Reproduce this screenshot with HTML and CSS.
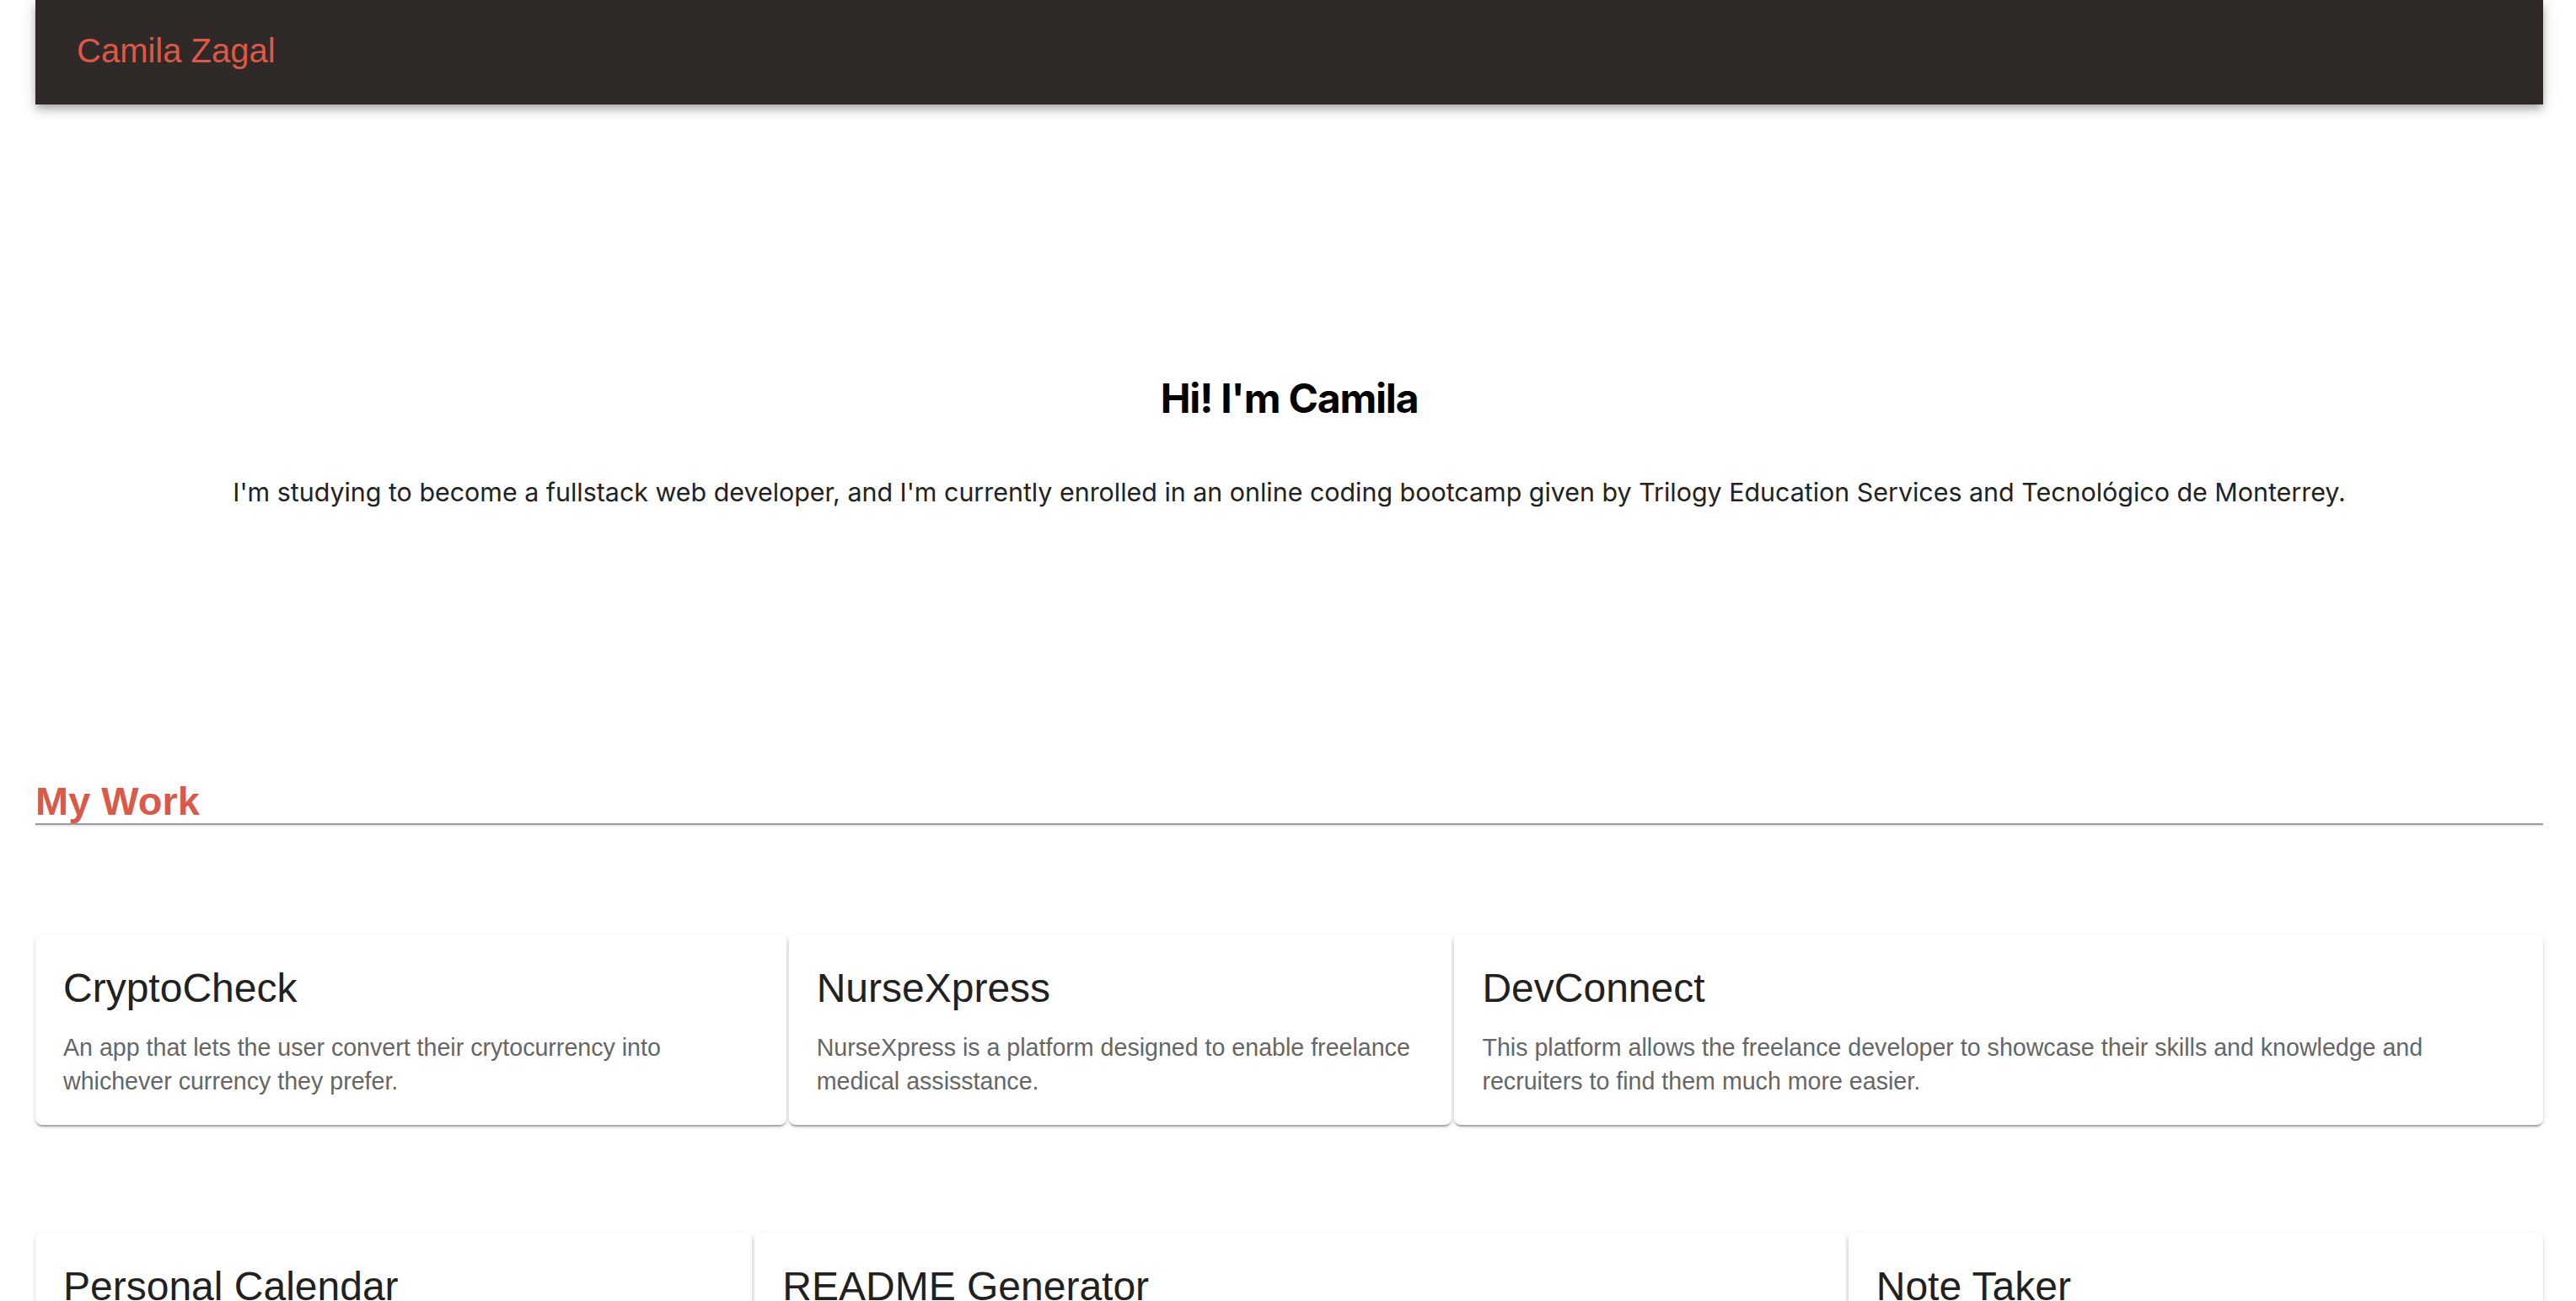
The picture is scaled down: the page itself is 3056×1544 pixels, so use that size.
FILE: index.html
```html
<!DOCTYPE html>
<html lang="en">
<head>
<meta charset="utf-8">
<title>Camila Zagal</title>
<link rel="stylesheet" href="styles.css">
</head>
<body>
<div class="page">
  <header class="appbar">
    <div class="brand">Camila Zagal</div>
  </header>

  <section class="hero">
    <h1 class="hero-title">Hi! I'm Camila</h1>
    <p class="hero-text">I'm studying to become a fullstack web developer, and I'm currently enrolled in an online coding bootcamp given by Trilogy Education Services and Tecnológico de Monterrey.</p>
  </section>

  <section class="work">
    <h2 class="work-title">My Work</h2>
    <hr class="divider">

    <div class="card-row row-one">
      <article class="card">
        <h3 class="card-title">CryptoCheck</h3>
        <p class="card-text">An app that lets the user convert their crytocurrency into whichever currency they prefer.</p>
      </article>
      <article class="card">
        <h3 class="card-title">NurseXpress</h3>
        <p class="card-text">NurseXpress is a platform designed to enable freelance medical assisstance.</p>
      </article>
      <article class="card">
        <h3 class="card-title">DevConnect</h3>
        <p class="card-text">This platform allows the freelance developer to showcase their skills and knowledge and recruiters to find them much more easier.</p>
      </article>
    </div>

    <div class="card-row row-two">
      <article class="card">
        <h3 class="card-title">Personal Calendar</h3>
        <p class="card-text">A simple calendar to plan the day.</p>
      </article>
      <article class="card">
        <h3 class="card-title">README Generator</h3>
        <p class="card-text">A command-line application that generates a README file.</p>
      </article>
      <article class="card">
        <h3 class="card-title">Note Taker</h3>
        <p class="card-text">An application to write and save notes.</p>
      </article>
    </div>
  </section>
</div>
</body>
</html>
```

FILE: styles.css
```css
html, body {
  margin: 0;
  padding: 0;
  background: #ffffff;
}

.page {
  padding: 0 39px 200px 42px;
  font-family: "Liberation Sans", Arial, sans-serif;
}

.appbar {
  height: 124px;
  background: #2f2a27;
  display: flex;
  align-items: center;
  padding: 0 48px 4px 49px;
  box-sizing: border-box;
  box-shadow: 0 4px 8px -2px rgba(0,0,0,0.2), 0 8px 10px 0 rgba(0,0,0,0.14), 0 2px 20px 0 rgba(0,0,0,0.12);
}

.brand {
  color: #dc5847;
  font-size: 40px;
  line-height: 120px;
  font-weight: 400;
}

.hero {
  padding-top: 320px;
  text-align: center;
  font-family: Inter, "Liberation Sans", sans-serif;
}

.hero-title {
  margin: 0;
  font-size: 48px;
  line-height: 58px;
  font-weight: 700;
  letter-spacing: -1.2px;
  color: #000;
}

.hero-text {
  margin: 60px 0 0;
  font-size: 30.4px;
  line-height: 45px;
  color: #222;
}

.work {
  padding-top: 318px;
}

.work-title {
  margin: 0;
  font-size: 47px;
  line-height: 52px;
  font-weight: 700;
  color: #d95a48;
}

.divider {
  margin: 0;
  height: 0;
  border: 0;
  border-top: 2px solid #9a9a9a;
  border-bottom: 2px solid #ececec;
}

.card-row {
  display: grid;
  gap: 3px;
  margin-top: 128px;
}

.row-one {
  grid-template-columns: 891fr 787fr 1292fr;
}

.row-two {
  grid-template-columns: 850fr 1294fr 824fr;
}

.card {
  background: #fff;
  border-radius: 8px;
  padding: 32px 32px 32px 33px;
  box-shadow: 0 4px 2px -2px rgba(0,0,0,0.2), 0 2px 2px 0 rgba(0,0,0,0.14), 0 2px 6px 0 rgba(0,0,0,0.12);
}

.card-title {
  margin: 0 0 18px;
  font-size: 48px;
  line-height: 64px;
  font-weight: 400;
  color: #212121;
}

.card-text {
  margin: 0;
  font-size: 28.6px;
  line-height: 40px;
  color: #666;
}
```
